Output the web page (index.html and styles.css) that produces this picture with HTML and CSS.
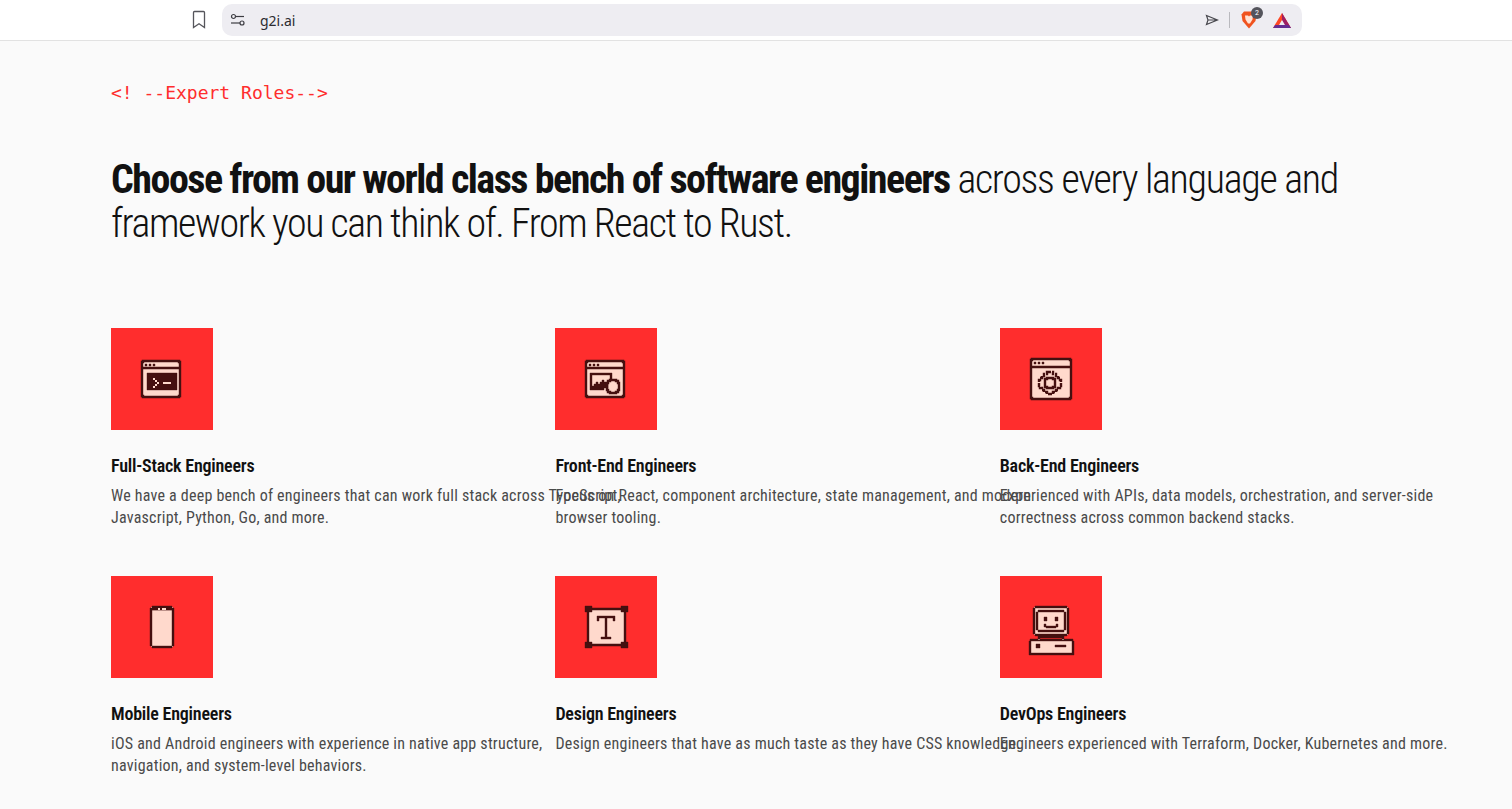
FILE: index.html
```html
<!DOCTYPE html>
<html lang="en">
<head>
  <meta charset="UTF-8" />
  <title>g2i.ai</title>
  <link rel="stylesheet" href="styles.css">
</head>
<body>

  <div class="toolbar">
    <svg class="bookmark" width="16" height="20" viewBox="0 0 16 20"><path d="M2.5 2.5Q2.5 1.500 3.500 1.500H12.500Q13.500 1.500 13.500 2.500V17.500L8 13.800L2.500 17.500Z" fill="none" stroke="#55555b" stroke-width="1.300"/></svg>
    <div class="urlbar">
      <svg class="tune" width="16" height="14" viewBox="0 0 16 14"><g fill="none" stroke="#3c3c42" stroke-width="1.200"><circle cx="3.500" cy="3.500" r="2"/><path d="M5.500 3.500H14"/><circle cx="12" cy="10" r="2"/><path d="M1 10H10"/></g></svg>
      <span class="url">g2i.ai</span>
      <div class="url-actions">
        <svg width="14" height="12" viewBox="0 0 14 12"><path d="M1.500 1.500L12.500 6L1.500 10.500L3 6ZM3 6H12" fill="none" stroke="#46464c" stroke-width="1.200"/></svg>
        <span class="sep"></span>
        <span class="brave">
          <svg width="18" height="20" viewBox="0 0 18 20"><path d="M4 1.500H14L16.500 4.500L15.500 11L9 18.500L2.500 11L1.500 4.500Z" fill="#f0531f"/><path d="M5 5.500H8L9 6.500L10 5.500H13L12.500 9.500L10 13.500H8L5.500 9.500Z" fill="#ffe3d6"/></svg>
          <span class="badge">2</span>
        </span>
        <svg class="bat" width="20" height="17" viewBox="0 0 20 17"><path d="M10 1L19 16H1Z" fill="#ff4724"/><path d="M10 1L19 16H13.500L10 9Z" fill="#9e1f63"/><path d="M1 16H19L16.800 13H3.200Z" fill="#662d91"/><path d="M10 8L13 13H7Z" fill="#eeedf2"/></svg>
      </div>
    </div>
  </div>

  <main class="roles">
    <p class="eyebrow">&lt;! --Expert Roles--&gt;</p>
    <h1 class="headline"><strong>Choose from our world class bench of software engineers</strong> across every language and<br><span class="headline-end">framework you can think of. From React to Rust.</span></h1>

    <div class="role-grid">

      <article class="role">
        <div class="role-icon">
          <svg width="64" height="64" viewBox="0 0 64 64">
            <path class="fill" d="M12 14H50V50H12Z"/>
            <path class="line" d="M13 14H49V15H50V49H49V50H13V49H12V15H13ZM12 21H50"/>
            <path class="dark" d="M15 17H17V19H15ZM19 17H21V19H19ZM23 17H25V19H23ZM17 26H47V43H17Z"/>
            <path class="light" d="M23 31H25V33H27V35H29V37H27V39H25V41H23V39H25V37H27V35H25V33H23ZM33 35H41V37H33Z"/>
          </svg>
        </div>
        <h3>Full-Stack Engineers</h3>
        <p>We have a deep bench of engineers that can work full stack across TypeScript,<br>Javascript, Python, Go, and more.</p>
      </article>

      <article class="role">
        <div class="role-icon">
          <svg width="64" height="64" viewBox="0 0 64 64">
            <path class="fill" d="M12 14H50V50H12Z"/>
            <path class="line" d="M13 14H49V15H50V49H49V50H13V49H12V15H13ZM12 21H50"/>
            <path class="dark" d="M15 17H17V19H15ZM19 17H21V19H19ZM23 17H25V19H23ZM16 26H38V28H18V41H16ZM36 28H38V32H36ZM16 41H30V43H16ZM18 41V39H20V37H22V35H24V37H26V35H28V33H30V35H32V37H34V41Z"/>
            <path class="line" d="M36 33H42V34H44V36H45V43H44V45H42V46H36V45H34V43H33V36H34V34H36Z"/>
          </svg>
        </div>
        <h3>Front-End Engineers</h3>
        <p>Focus on React, component architecture, state management, and modern<br>browser tooling.</p>
      </article>

      <article class="role">
        <div class="role-icon">
          <svg width="64" height="64" viewBox="0 0 64 64">
            <path class="fill" d="M12 12H52V52H12Z"/>
            <path class="line" d="M13 12H51V13H52V51H51V52H13V51H12V13H13ZM12 20H52"/>
            <path class="dark" d="M15 15H17V17H15ZM19 15H21V17H19ZM23 15H25V17H23Z"/>
            <path class="line" d="M28 25H34V27H37V29H39V31H41V33H42V39H41V41H39V43H37V45H34V47H28V45H25V43H23V41H21V39H20V33H21V31H23V29H25V27H28Z" stroke-dasharray="4 1"/>
            <path class="line" d="M28 31H34V32H36V40H34V41H28V40H26V32H28Z"/>
          </svg>
        </div>
        <h3>Back-End Engineers</h3>
        <p>Experienced with APIs, data models, orchestration, and server-side<br>correctness across common backend stacks.</p>
      </article>

      <article class="role">
        <div class="role-icon">
          <svg width="64" height="64" viewBox="0 -2 64 64">
            <path class="fill" d="M21 10H43V50H21Z"/>
            <path class="dark" d="M22 9H42V11H44V49H42V51H22V49H20V11H22ZM22 13V49H42V13Z"/>
            <path class="dark" d="M22 11H42V13H22Z"/>
            <path class="light" d="M28 11H30V13H28ZM32 11H36V13H32Z"/>
          </svg>
        </div>
        <h3>Mobile Engineers</h3>
        <p>iOS and Android engineers with experience in native app structure,<br>navigation, and system-level behaviors.</p>
      </article>

      <article class="role">
        <div class="role-icon">
          <svg width="64" height="64" viewBox="0 -2 64 64">
            <path class="fill" d="M14 12H51V48H14Z"/>
            <path class="line" d="M14 12H51V48H14Z"/>
            <path class="dark" d="M11 9H18V15H11ZM47 9H54V15H47ZM11 45H18V51H11ZM47 45H54V51H47Z"/>
            <path class="dark" d="M23 19H41V24H39V21H33V40H37V42H27V40H31V21H25V24H23Z"/>
          </svg>
        </div>
        <h3>Design Engineers</h3>
        <p>Design engineers that have as much taste as they have CSS knowledge.</p>
      </article>

      <article class="role">
        <div class="role-icon">
          <svg width="64" height="64" viewBox="0 -2 64 64">
            <path class="fill" d="M15 10H49V38H15ZM11 42H54V58H11Z"/>
            <path class="dark" d="M16 9H48V11H50V37H48V39H16V37H14V11H16ZM16 11V37H48V11Z"/>
            <path class="dark" d="M19 13H45V15H47V33H45V35H19V33H17V15H19ZM19 15V33H45V15Z"/>
            <path class="dark" d="M19 39H45V43H43V41H21V43H19ZM11 42H54V44H55V58H10V44H11ZM12 44V56H53V44Z"/>
            <path class="dark" d="M25 20H28V24H25ZM36 20H39V24H36ZM25 27H27V29H37V27H39V30H37V31H27V30H25ZM17 47H21V51H17ZM36 48H47V50H36Z"/>
          </svg>
        </div>
        <h3>DevOps Engineers</h3>
        <p>Engineers experienced with Terraform, Docker, Kubernetes and more.</p>
      </article>

    </div>
  </main>

</body>
</html>
```

FILE: styles.css
```css
* {
  box-sizing: border-box;
}

body {
  margin: 0;
  background-color: #fafafa;
  font-family: Roboto, "Liberation Sans", sans-serif;
  font-stretch: 75%;
  overflow: hidden;
}

/* browser bar */
.toolbar {
  height: 41px;
  background-color: #fff;
  border-bottom: 1px solid #e2e2e2;
  display: flex;
  align-items: center;
  padding: 0 210px 0 191px;
}

.bookmark {
  margin-right: 15px;
}

.urlbar {
  flex: 1;
  height: 32px;
  background-color: #eeedf2;
  border-radius: 10px;
  display: flex;
  align-items: center;
  padding: 0 10px 0 8px;
}

.tune {
  margin-right: 14px;
}

.url {
  font-family: "Noto Sans", sans-serif;
  font-stretch: normal;
  font-size: 14px;
  color: #2c2c30;
}

.url-actions {
  margin-left: auto;
  display: flex;
  align-items: center;
}

.sep {
  width: 1px;
  height: 16px;
  background-color: #b9b9be;
  margin: 0 10px;
}

.brave {
  position: relative;
  display: flex;
  margin-right: 14px;
}

.badge {
  position: absolute;
  top: -3px;
  left: 11px;
  width: 12px;
  height: 12px;
  border-radius: 50%;
  background-color: #54545c;
  color: #fff;
  font-size: 8px;
  line-height: 12px;
  text-align: center;
}

/* section */
.roles {
  padding: 0 0 0 111px;
}

.eyebrow {
  margin: 41px 0 0;
  font-family: "DejaVu Sans Mono", monospace;
  font-stretch: normal;
  font-size: 18px;
  line-height: 22px;
  color: #ff2d2d;
}

.headline {
  margin: 54px 0 0;
  font-size: 40px;
  line-height: 44px;
  font-weight: 300;
  letter-spacing: -1.3px;
  color: #111;
  white-space: nowrap;
}

.headline strong {
  font-weight: 700;
  letter-spacing: -1.5px;
}

.headline-end {
  letter-spacing: -1.43px;
}

.role-grid {
  margin-top: 82px;
  display: grid;
  grid-template-columns: repeat(3, 444.4px);
  row-gap: 47px;
}

.role-icon {
  width: 102px;
  height: 102px;
  background-color: #ff2d2d;
  display: flex;
  align-items: center;
  justify-content: center;
}

.role h3 {
  margin: 25px 0 0;
  font-size: 18px;
  line-height: 22px;
  font-weight: 600;
  letter-spacing: -0.22px;
  color: #111;
}

.role p {
  margin: 8px 0 0;
  font-size: 16px;
  line-height: 22px;
  letter-spacing: 0.22px;
  color: #4a4a4a;
  white-space: nowrap;
}

/* pixel icons */
.fill {
  fill: #ffd9cc;
}

.line {
  fill: none;
  stroke: #451010;
  stroke-width: 2.4;
}

.dark {
  fill: #451010;
  fill-rule: evenodd;
  stroke: #451010;
  stroke-width: 0.4;
}

.light {
  fill: #ffd9cc;
}
```
